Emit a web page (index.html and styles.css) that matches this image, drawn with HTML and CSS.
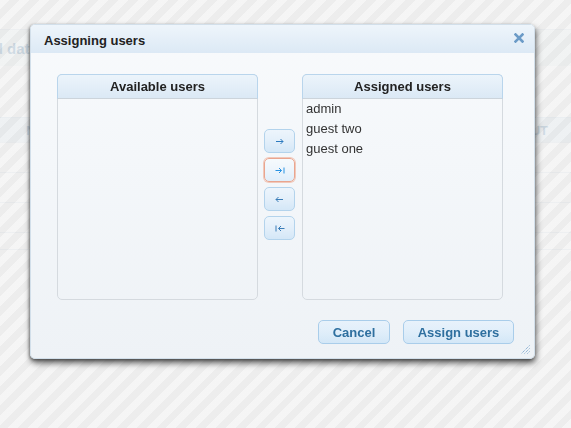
FILE: index.html
```html
<!DOCTYPE html>
<html>
<head>
<meta charset="utf-8">
<link rel="stylesheet" href="styles.css">
</head>
<body>
<div class="page">
  <div class="page-head"><h1 class="page-title">Shared data sets</h1></div>
  <div class="grid">
    <div class="grid-row grid-header"><span class="cell">Name</span><span class="cell cell-right">LAYOUT</span></div>
    <div class="grid-row"></div>
    <div class="grid-row"></div>
    <div class="grid-row"></div>
    <div class="grid-row grid-last"></div>
  </div>
</div>
<div class="overlay"></div>
<div class="dialog">
  <div class="dialog-titlebar">
    <span class="dialog-title">Assigning users</span>
    <span class="dialog-close"><svg width="10" height="10" viewBox="0 0 10 10"><path d="M1.5 1.5L8.5 8.5M8.5 1.5L1.5 8.5" stroke="#6b9bc7" stroke-width="2.6" stroke-linecap="square"/></svg></span>
  </div>
  <div class="dialog-content">
    <div class="picker">
      <div class="list">
        <div class="list-head">Available users</div>
        <ul class="list-items"></ul>
      </div>
      <div class="moves">
        <button class="move"><svg width="9" height="7" viewBox="0 0 9 7"><path d="M1 3.5H8M5.5 1L8 3.5L5.5 6" fill="none" stroke="#2c7abf" stroke-width="1"/></svg></button>
        <button class="move move-focus"><svg width="10" height="7" viewBox="0 0 10 7"><path d="M0.5 3.5H6.5M4 1L6.5 3.5L4 6M9 0.5V6.5" fill="none" stroke="#2a93e2" stroke-width="1"/></svg></button>
        <button class="move"><svg width="9" height="7" viewBox="0 0 9 7"><path d="M8 3.5H1M3.5 1L1 3.5L3.5 6" fill="none" stroke="#3a7db8" stroke-width="1"/></svg></button>
        <button class="move"><svg width="10" height="7" viewBox="0 0 10 7"><path d="M9.5 3.5H3.5M6 1L3.5 3.5L6 6M1 0.5V6.5" fill="none" stroke="#3a7db8" stroke-width="1"/></svg></button>
      </div>
      <div class="list">
        <div class="list-head">Assigned users</div>
        <ul class="list-items">
          <li>admin</li>
          <li>guest two</li>
          <li>guest one</li>
        </ul>
      </div>
    </div>
  </div>
  <div class="dialog-buttons">
    <button class="btn btn-cancel">Cancel</button>
    <button class="btn btn-assign">Assign users</button>
  </div>
  <span class="resize-handle"><svg width="9" height="9" viewBox="0 0 9 9"><path d="M8.5 0.5L0.5 8.5M8.5 3.5L3.5 8.5M8.5 6.5L6.5 8.5" fill="none" stroke="#6b9bc7" stroke-width="1" stroke-dasharray="1 1"/></svg></span>
</div>
</body>
</html>
```

FILE: styles.css
```css
html, body {
  margin: 0;
  padding: 0;
  width: 571px;
  height: 428px;
  overflow: hidden;
  background: #ffffff;
  font-family: "Liberation Sans", Arial, sans-serif;
}

.page {
  padding-top: 29px;
}

.page-head {
  height: 36px;
  border-top: 1px solid #d2dce6;
  background: #eaf0f5;
  display: flex;
  align-items: center;
}

.page-title {
  margin: 0 0 0 -48px;
  font-size: 15px;
  font-weight: bold;
  color: #2e6e9e;
  white-space: nowrap;
}

.grid {
  margin-top: 51px;
}

.grid-row {
  height: 29px;
  border-bottom: 1px solid #d4dde5;
  display: flex;
  align-items: center;
  justify-content: space-between;
}

.grid-header {
  height: 24px;
  background: #d6e5f2;
  border-top: 1px solid #c4d6e6;
}

.grid-last {
  height: 16px;
}

.cell {
  font-size: 13px;
  font-weight: bold;
  color: #2e6e9e;
  padding-left: 26px;
}

.cell-right {
  padding-left: 0;
  padding-right: 23px;
}

.overlay {
  position: fixed;
  inset: 0;
  background: repeating-linear-gradient(135deg,
    rgba(243, 243, 243, 0.82) 0px,
    rgba(243, 243, 243, 0.82) 7px,
    rgba(233, 233, 233, 0.82) 7px,
    rgba(233, 233, 233, 0.82) 14px);
}

.dialog {
  position: absolute;
  left: 30px;
  top: 24px;
  width: 503px;
  border: 1px solid #d2dfea;
  border-radius: 5px;
  background: linear-gradient(to bottom, #f8fafc 0%, #f4f7fa 40%, #eef2f6 100%);
  box-shadow: 1px 4px 6px rgba(0, 0, 0, 0.62), -1px 1px 3px rgba(0, 0, 0, 0.35);
}

.dialog-titlebar {
  height: 28px;
  border-radius: 4px 4px 0 0;
  background: linear-gradient(to bottom, #eef5fb, #dce9f5);
  display: flex;
  align-items: center;
  justify-content: space-between;
  padding: 0 10px 0 13px;
}

.dialog-title {
  font-size: 13px;
  font-weight: bold;
  color: #222222;
  padding-top: 2px;
}

.dialog-close {
  display: flex;
  margin-top: -2px;
}

.dialog-content {
  padding: 21px 0 0 26px;
}

.picker {
  display: grid;
  grid-template-columns: 201px 44px 201px;
}

.list {
  height: 224px;
  border: 1px solid #d5dadf;
  border-radius: 5px;
  display: flex;
  flex-direction: column;
}

.list-head {
  margin: -1px -1px 0;
  height: 23px;
  border: 1px solid #b9d5ec;
  border-bottom-color: #ccd4db;
  border-radius: 5px 5px 0 0;
  background: linear-gradient(to bottom, #ecf4fb, #dbe9f5);
  font-size: 13px;
  font-weight: bold;
  color: #222222;
  display: flex;
  align-items: center;
  justify-content: center;
}

.list-items {
  list-style: none;
  margin: 0;
  padding: 0 0 0 3px;
}

.list-items li {
  font-size: 13px;
  line-height: 20px;
  color: #333333;
}

.moves {
  display: flex;
  flex-direction: column;
  gap: 5px;
  padding: 55px 0 0 6px;
}

.move {
  width: 31px;
  height: 24px;
  padding: 0;
  margin: 0;
  border: 1px solid #b3d3ec;
  border-radius: 5px;
  background: linear-gradient(to bottom, #edf5fc 0%, #e3effa 50%, #d4e7f7 100%);
  display: flex;
  align-items: center;
  justify-content: center;
}

.move-focus {
  border: 1px solid #e9a58f;
  box-shadow: 0 0 0 1px #f1c9bb;
  background: linear-gradient(to bottom, #f6fafd 0%, #edf5fc 50%, #e0eefa 100%);
}

.dialog-buttons {
  display: flex;
  justify-content: flex-end;
  gap: 13px;
  padding: 20px 20px 14px 0;
}

.btn {
  height: 24px;
  padding: 0;
  margin: 0;
  border: 1px solid #a9cdea;
  border-radius: 5px;
  background: linear-gradient(to bottom, #e8f2fb 0%, #e0eefa 50%, #d3e7f7 100%);
  font-family: "Liberation Sans", Arial, sans-serif;
  font-size: 13px;
  font-weight: bold;
  color: #2e6f9f;
}

.btn-cancel {
  width: 72px;
}

.btn-assign {
  width: 111px;
}

.resize-handle {
  position: absolute;
  right: 4px;
  bottom: 4px;
  display: flex;
}
```
